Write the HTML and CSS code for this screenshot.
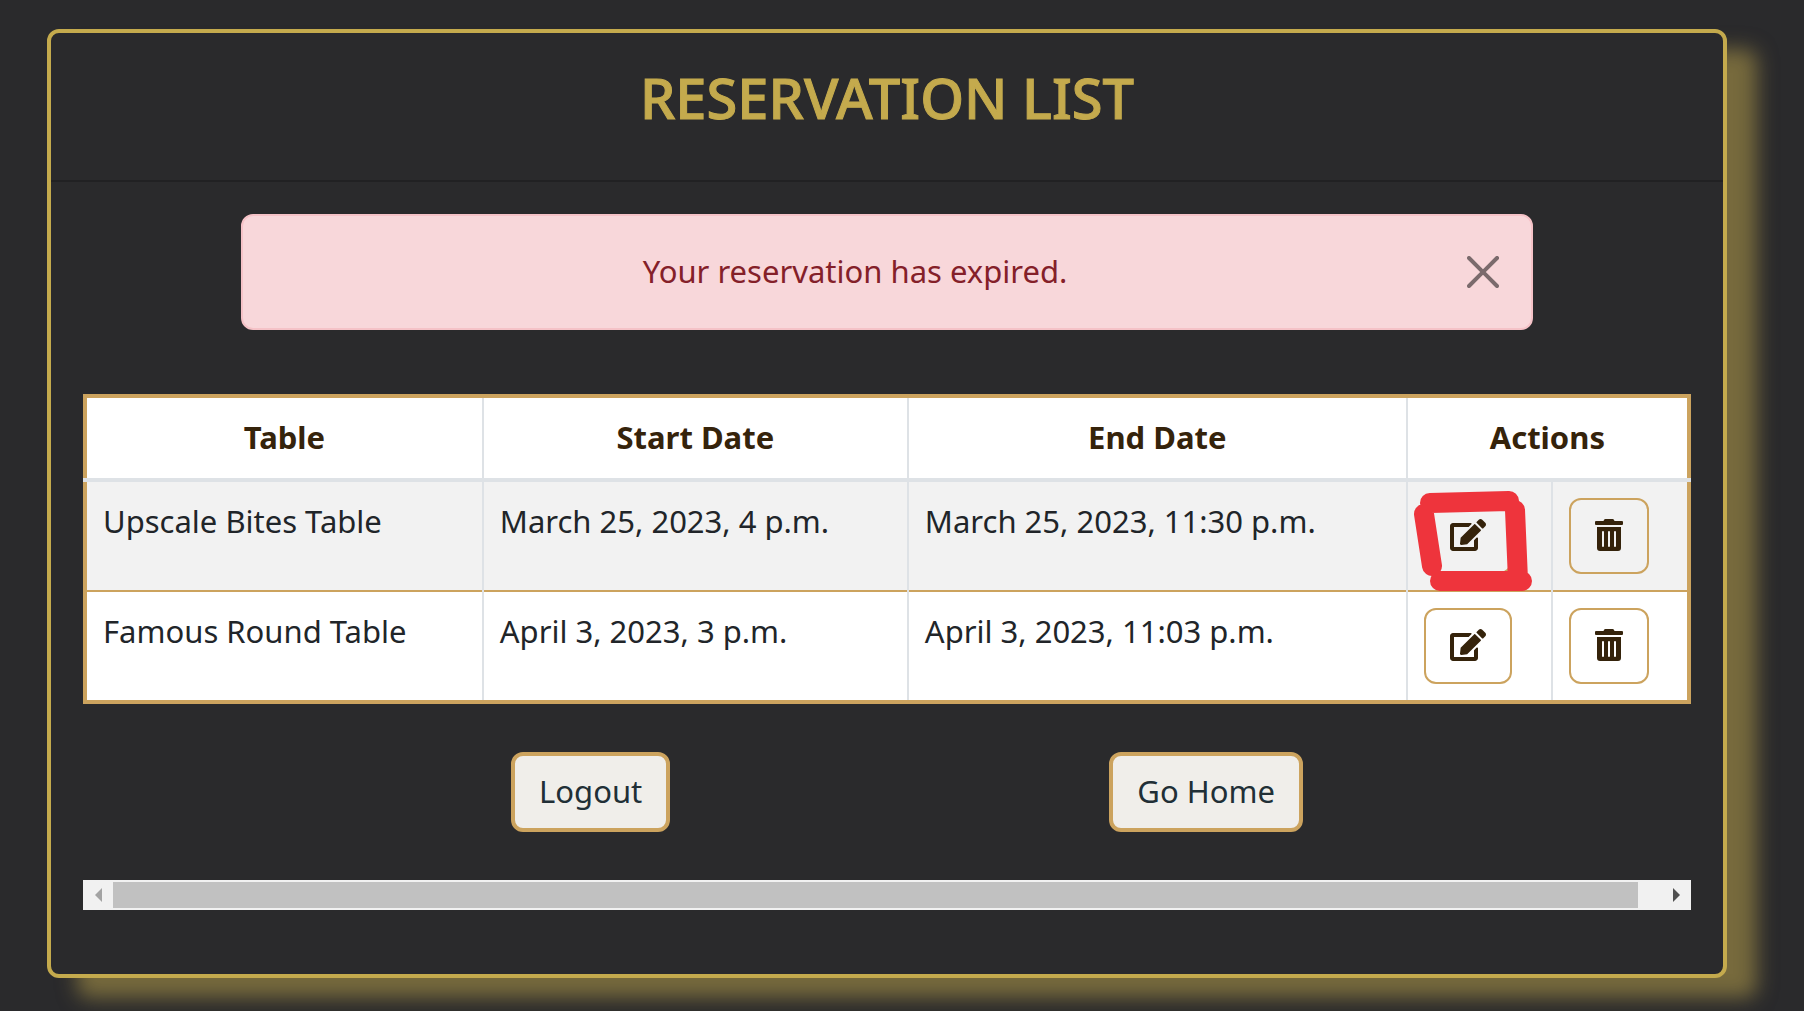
FILE: index.html
```html
<!DOCTYPE html>
<html lang="en">
<head>
<meta charset="utf-8">
<meta name="viewport" content="width=device-width, initial-scale=1">
<title>Reservation List</title>
<link rel="stylesheet" href="styles.css">
</head>
<body>
<svg class="sprite" aria-hidden="true">
  <symbol id="icon-edit" viewBox="0 0 576 512"><path d="M402.600 83.200l90.200 90.200c3.800 3.800 3.800 10 0 13.800L274.400 405.600l-92.800 10.300c-12.400 1.400-22.900-9.100-21.500-21.500l10.300-92.800L388.800 83.200c3.800-3.800 10-3.800 13.800 0zm162-22.900l-48.800-48.800c-15.200-15.200-39.900-15.200-55.200 0l-35.400 35.400c-3.800 3.800-3.800 10 0 13.800l90.200 90.200c3.800 3.800 10 3.800 13.800 0l35.400-35.400c15.200-15.300 15.200-40 0-55.200zM384 346.200V448H64V128h229.800c3.200 0 6.200-1.300 8.500-3.500l40-40c7.600-7.600 2.200-20.500-8.500-20.500H48C21.500 64 0 85.500 0 112v352c0 26.500 21.500 48 48 48h352c26.500 0 48-21.500 48-48V306.200c0-10.700-12.900-16-20.500-8.500l-40 40c-2.200 2.300-3.500 5.300-3.500 8.500z"/></symbol>
  <symbol id="icon-trash" viewBox="0 0 448 512"><path d="M32 464a48 48 0 0 0 48 48h288a48 48 0 0 0 48-48V128H32zm272-256a16 16 0 0 1 32 0v224a16 16 0 0 1-32 0zm-96 0a16 16 0 0 1 32 0v224a16 16 0 0 1-32 0zm-96 0a16 16 0 0 1 32 0v224a16 16 0 0 1-32 0zM432 32H312l-9.400-18.700A24 24 0 0 0 281.100 0H166.800a23.720 23.720 0 0 0-21.400 13.300L136 32H16A16 16 0 0 0 0 48v32a16 16 0 0 0 16 16h416a16 16 0 0 0 16-16V48a16 16 0 0 0-16-16z"/></symbol>
</svg>

<main class="card">
  <header class="card-header">
    <h1 class="card-title">RESERVATION LIST</h1>
  </header>
  <div class="card-body">
    <div class="alert" role="alert">
      <p class="alert-text">Your reservation has expired.</p>
      <button class="alert-close" type="button" aria-label="Close">
        <svg class="close-icon" viewBox="0 0 16 16"><path d="M.293.293a1 1 0 0 1 1.414 0L8 6.586 14.293.293a1 1 0 1 1 1.414 1.414L9.414 8l6.293 6.293a1 1 0 0 1-1.414 1.414L8 9.414l-6.293 6.293a1 1 0 0 1-1.414-1.414L6.586 8 .293 1.707a1 1 0 0 1 0-1.414z"/></svg>
      </button>
    </div>

    <table class="reservations">
      <colgroup>
        <col class="col-table"><col class="col-start"><col class="col-end"><col class="col-edit"><col class="col-delete">
      </colgroup>
      <thead>
        <tr>
          <th scope="col">Table</th>
          <th scope="col">Start Date</th>
          <th scope="col">End Date</th>
          <th scope="colgroup" colspan="2">Actions</th>
        </tr>
      </thead>
      <tbody>
        <tr>
          <td>Upscale Bites Table</td>
          <td>March 25, 2023, 4 p.m.</td>
          <td>March 25, 2023, 11:30 p.m.</td>
          <td>
            <div class="marked">
              <button class="action" type="button" aria-label="Edit Upscale Bites Table"><svg class="icon-edit"><use href="#icon-edit"/></svg></button>
              <svg class="marker" viewBox="0 0 120 108" aria-hidden="true"><path d="M20 15L99 13M14 26L22 78M105 22L108 92M30 93L112 93"/></svg>
            </div>
          </td>
          <td><button class="action" type="button" aria-label="Delete Upscale Bites Table"><svg class="icon-trash"><use href="#icon-trash"/></svg></button></td>
        </tr>
        <tr>
          <td>Famous Round Table</td>
          <td>April 3, 2023, 3 p.m.</td>
          <td>April 3, 2023, 11:03 p.m.</td>
          <td><button class="action" type="button" aria-label="Edit Famous Round Table"><svg class="icon-edit"><use href="#icon-edit"/></svg></button></td>
          <td><button class="action" type="button" aria-label="Delete Famous Round Table"><svg class="icon-trash"><use href="#icon-trash"/></svg></button></td>
        </tr>
      </tbody>
    </table>

    <nav class="links">
      <a class="link-button" href="#logout">Logout</a>
      <a class="link-button" href="#home">Go Home</a>
    </nav>

    <div class="scrollbar">
      <button class="scroll-arrow" type="button" aria-label="Scroll left" disabled><svg class="arrow-icon" viewBox="0 0 7 14"><path d="M7 0v14L0 7z"/></svg></button>
      <div class="scroll-track"><div class="scroll-thumb"></div></div>
      <button class="scroll-arrow" type="button" aria-label="Scroll right"><svg class="arrow-icon" viewBox="0 0 7 14"><path d="M0 0v14l7-7z"/></svg></button>
    </div>
  </div>
</main>
</body>
</html>
```
FILE: styles.css
```css
*,
*::before,
*::after {
  box-sizing: border-box;
}

body {
  margin: 0;
  padding: 29px 77px 33px 47px;
  background: #2a2a2c;
  color: #212529;
  font-family: "Noto Sans", sans-serif;
  font-size: 31px;
  line-height: 46px;
}

button {
  font: inherit;
  cursor: pointer;
}

svg {
  display: block;
  fill: currentColor;
}

.sprite {
  position: absolute;
  width: 0;
  height: 0;
}

.card {
  border: 4px solid #c4aa4d;
  border-radius: 12px;
  background: #2a2a2c;
  box-shadow: 30px 20px 20px rgba(196, 170, 77, 0.5);
}

.card-header {
  padding: 32px 32px 51px;
  border-bottom: 2px solid #212123;
}

.card-title {
  margin: 0;
  color: #c4aa4d;
  font-size: 56px;
  font-weight: 500;
  line-height: 64px;
  text-align: center;
  -webkit-text-stroke: 1px #c4aa4d;
}

.card-body {
  padding: 32px 32px 64px;
}

/* Alert */
.alert {
  display: flex;
  align-items: center;
  width: 80.4%;
  margin: 0 auto 64px;
  padding: 32px;
  border: 2px solid #f5c2c7;
  border-radius: 12px;
  background: #f8d7da;
  color: #842029;
}

.alert-text {
  flex: 1;
  margin: 0;
  padding: 0 32px 2px 0;
  text-align: center;
}

.alert-close {
  padding: 0;
  border: 0;
  background: none;
  color: #000;
  opacity: 0.5;
}

.close-icon {
  width: 32px;
  height: 32px;
}

/* Reservations */
.reservations {
  width: 100%;
  margin-bottom: 48px;
  border: 4px solid #cca35e;
  border-collapse: collapse;
  table-layout: fixed;
  background: #fff;
}

.col-table { width: 24.8%; }
.col-start { width: 26.5%; }
.col-end { width: 31.1%; }
.col-edit { width: 9.05%; }

.reservations th,
.reservations td {
  padding: 16px;
  border-right: 2px solid #dee2e6;
  text-align: left;
  vertical-align: top;
}

.reservations th:last-child,
.reservations td:last-child {
  border-right: 4px solid #cca35e;
}

.reservations th {
  padding-bottom: 18px;
  border-bottom: 4px solid #dee2e6;
  color: #35230b;
  text-align: center;
}

.reservations tbody tr + tr {
  border-top: 2px solid #cca35e;
}

.reservations tbody tr:first-child {
  background: #f2f2f2;
}

.action {
  display: flex;
  align-items: center;
  justify-content: center;
  height: 76px;
  padding: 0 24px 2px;
  border: 2px solid #cca35e;
  border-radius: 12px;
  background: transparent;
  color: #35230b;
}

.icon-edit {
  width: 36px;
  height: 32px;
}

.icon-trash {
  width: 28px;
  height: 32px;
}

/* Hand-drawn highlight laid over the edit button */
.marked {
  position: relative;
}

.marker {
  position: absolute;
  top: -10px;
  left: -14px;
  width: 120px;
  height: 108px;
  overflow: visible;
  fill: none;
  stroke: #ee343c;
  stroke-width: 20px;
  stroke-linecap: round;
  pointer-events: none;
}

/* Links */
.links {
  display: flex;
  justify-content: center;
  gap: 28%;
  margin-bottom: 48px;
  padding-left: 40px;
}

.link-button {
  padding: 12px 24px 14px;
  border: 4px solid #cca35e;
  border-radius: 12px;
  background: #f0eeea;
  color: #212f36;
  text-decoration: none;
}

/* Scrollbar */
.scrollbar {
  display: flex;
  height: 30px;
  background: #f1f1f1;
}

.scroll-arrow {
  display: flex;
  align-items: center;
  justify-content: center;
  width: 30px;
  padding: 0;
  border: 0;
  background: none;
  color: #505050;
}

.scroll-arrow:disabled {
  color: #a3a3a3;
}

.arrow-icon {
  width: 7px;
  height: 14px;
}

.scroll-track {
  flex: 1;
  padding: 2px 0;
}

.scroll-thumb {
  width: 98.5%;
  height: 26px;
  background: #c1c1c1;
}
```
